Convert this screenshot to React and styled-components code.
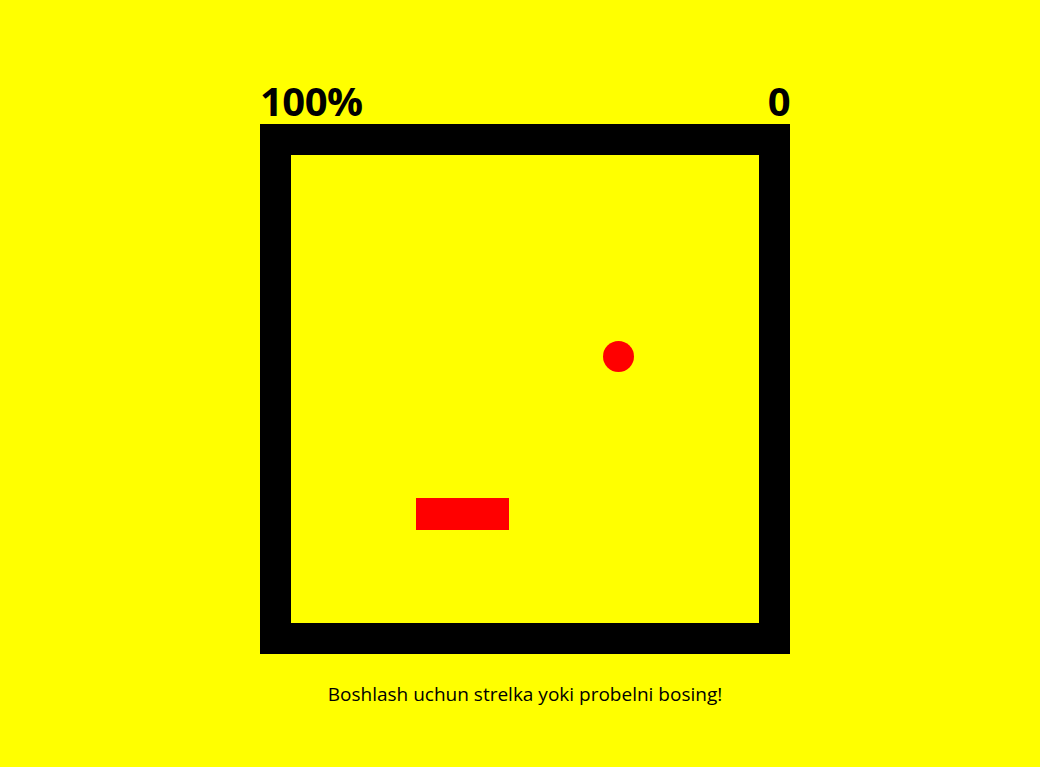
import React from 'react';
import styled, { createGlobalStyle } from 'styled-components';

const GlobalStyle = createGlobalStyle`
  html, body {
    margin: 0;
    padding: 0;
    background: #ffff00;
  }
  body {
    font-family: "Open Sans", "Noto Sans", sans-serif;
  }
`;

const Page = styled.div`
  display: flex;
  flex-direction: column;
  align-items: center;
  padding: 74px 0 0 10px;
  min-height: 767px;
  box-sizing: border-box;
`;

const Game = styled.div`
  width: 530px;
  display: flex;
  flex-direction: column;
`;

const Header = styled.div`
  display: flex;
  justify-content: space-between;
  align-items: flex-end;
  height: 50px;
  font-size: 40px;
  font-weight: 700;
  line-height: 46px;
  color: #000;
  letter-spacing: -0.5px;
`;

const Board = styled.div`
  position: relative;
  width: 468px;
  height: 468px;
  border: 31px solid #000;
`;

const Ball = styled.div`
  position: absolute;
  left: ${(p) => p.x}px;
  top: ${(p) => p.y}px;
  width: 31px;
  height: 31px;
  border-radius: 50%;
  background: #ff0000;
`;

const Paddle = styled.div`
  position: absolute;
  left: ${(p) => p.x}px;
  top: ${(p) => p.y}px;
  width: 93px;
  height: 32px;
  background: #ff0000;
`;

const Hint = styled.p`
  margin: 27px 0 0;
  text-align: center;
  font-size: 19px;
  color: #000;
`;

export default function App() {
  return (
    <>
      <GlobalStyle />
      <Page>
        <Game>
          <Header>
            <span>100%</span>
            <span>0</span>
          </Header>
          <Board>
            <Ball x={312} y={186} />
            <Paddle x={125} y={343} />
          </Board>
          <Hint>Boshlash uchun strelka yoki probelni bosing!</Hint>
        </Game>
      </Page>
    </>
  );
}
